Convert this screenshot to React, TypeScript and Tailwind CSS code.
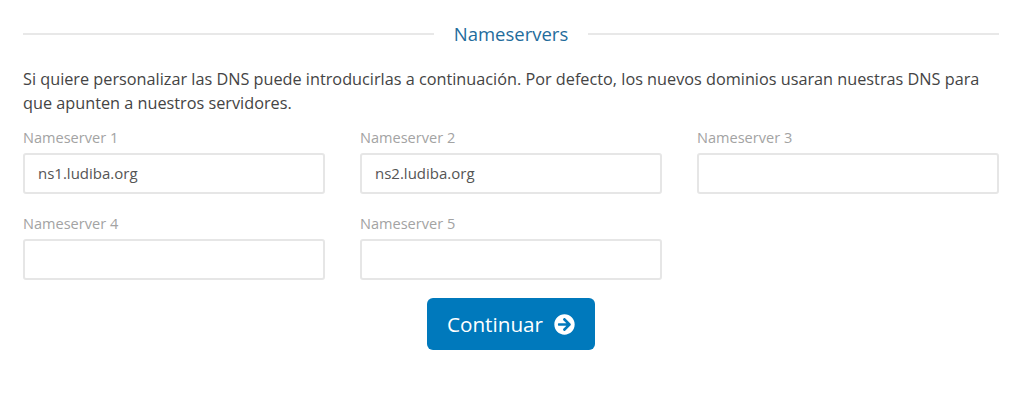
import { FaArrowCircleRight } from "react-icons/fa";

const font = "font-['Open_Sans',sans-serif]";

function Field({ label, value }: { label: string; value?: string }) {
  return (
    <div className="flex flex-col">
      <label className="mb-[5px] h-[21px] text-[14.55px] leading-[21px] text-[#a3a3a3]">{label}</label>
      <div className="flex h-[41px] items-center rounded-[3px] border-2 border-[#e6e6e6] bg-white px-[13px] text-[15px] text-[#555555]">
        {value}
      </div>
    </div>
  );
}

export default function App() {
  return (
    <div className={`${font} h-[400px] w-[1024px] overflow-hidden bg-white pl-[23px] pr-[25px] pt-[21px]`}>
      <div className="flex h-[25px] items-center">
        <div className="h-[2px] flex-1 bg-[#e8e8e8]" />
        <h2 className="px-5 text-[18.5px] font-normal text-[#1f6c9c]">Nameservers</h2>
        <div className="h-[2px] flex-1 bg-[#e8e8e8]" />
      </div>
      <p className="mt-[21px] text-[16.25px] leading-[24px] text-[#444444]">
        Si quiere personalizar las DNS puede introducirlas a continuación. Por defecto, los nuevos dominios usaran
        nuestras DNS para que apunten a nuestros servidores.
      </p>
      <div className="mt-[12px] grid grid-cols-3 gap-x-[35px] gap-y-[19px]">
        <Field label="Nameserver 1" value="ns1.ludiba.org" />
        <Field label="Nameserver 2" value="ns2.ludiba.org" />
        <Field label="Nameserver 3" />
        <Field label="Nameserver 4" />
        <Field label="Nameserver 5" />
      </div>
      <div className="mt-[18px] flex justify-center">
        <button className="flex h-[52px] w-[168px] items-center justify-center gap-[11px] rounded-[6px] bg-[#0079bc] text-[20.7px] text-white">
          <span className="pt-[1px]">Continuar</span>
          <FaArrowCircleRight className="size-[21px]" />
        </button>
      </div>
    </div>
  );
}
